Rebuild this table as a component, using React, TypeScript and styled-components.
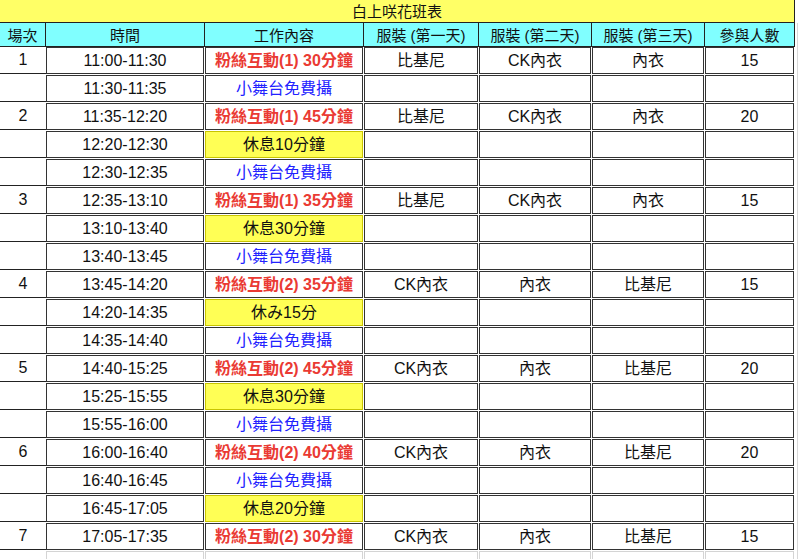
import styled, { createGlobalStyle } from "styled-components";

type Kind = "show" | "stage" | "break";

type Slot = {
  no?: string;
  time: string;
  kind: Kind;
  task: string;
  outfits?: [string, string, string];
  people?: string;
};

const FIRST: [string, string, string] = ["比基尼", "CK內衣", "內衣"];
const SECOND: [string, string, string] = ["CK內衣", "內衣", "比基尼"];

const slots: Slot[] = [
  { no: "1", time: "11:00-11:30", kind: "show", task: "粉絲互動(1) 30分鐘", outfits: FIRST, people: "15" },
  { time: "11:30-11:35", kind: "stage", task: "小舞台免費攝" },
  { no: "2", time: "11:35-12:20", kind: "show", task: "粉絲互動(1) 45分鐘", outfits: FIRST, people: "20" },
  { time: "12:20-12:30", kind: "break", task: "休息10分鐘" },
  { time: "12:30-12:35", kind: "stage", task: "小舞台免費攝" },
  { no: "3", time: "12:35-13:10", kind: "show", task: "粉絲互動(1) 35分鐘", outfits: FIRST, people: "15" },
  { time: "13:10-13:40", kind: "break", task: "休息30分鐘" },
  { time: "13:40-13:45", kind: "stage", task: "小舞台免費攝" },
  { no: "4", time: "13:45-14:20", kind: "show", task: "粉絲互動(2) 35分鐘", outfits: SECOND, people: "15" },
  { time: "14:20-14:35", kind: "break", task: "休み15分" },
  { time: "14:35-14:40", kind: "stage", task: "小舞台免費攝" },
  { no: "5", time: "14:40-15:25", kind: "show", task: "粉絲互動(2) 45分鐘", outfits: SECOND, people: "20" },
  { time: "15:25-15:55", kind: "break", task: "休息30分鐘" },
  { time: "15:55-16:00", kind: "stage", task: "小舞台免費攝" },
  { no: "6", time: "16:00-16:40", kind: "show", task: "粉絲互動(2) 40分鐘", outfits: SECOND, people: "20" },
  { time: "16:40-16:45", kind: "stage", task: "小舞台免費攝" },
  { time: "16:45-17:05", kind: "break", task: "休息20分鐘" },
  { no: "7", time: "17:05-17:35", kind: "show", task: "粉絲互動(2) 30分鐘", outfits: SECOND, people: "15" },
];

const headings = ["場次", "時間", "工作內容", "服裝 (第一天)", "服裝 (第二天)", "服裝 (第三天)", "參與人數"];

const App = () => {
  return (
    <>
      <GlobalStyle />
      <Page>
        <Sheet>
          <Title>白上咲花班表</Title>
          {headings.map((h) => (
            <HeadCell key={h}>{h}</HeadCell>
          ))}
          {slots.map((s) => (
            <Row key={s.time} s={s} />
          ))}
          <NumCell $ghost />
          {[0, 1, 2, 3, 4, 5].map((i) => (
            <Cell key={i} $tone="ghost" />
          ))}
        </Sheet>
        <Edge />
      </Page>
    </>
  );
};

const Row = ({ s }: { s: Slot }) => {
  const outfits = s.outfits ?? ["", "", ""];
  return (
    <>
      <NumCell>{s.no}</NumCell>
      <Cell>{s.time}</Cell>
      {s.kind === "break" ? (
        <Cell $tone="break">{s.task}</Cell>
      ) : (
        <Cell>
          {s.kind === "show" ? <ShowText>{s.task}</ShowText> : <StageText>{s.task}</StageText>}
        </Cell>
      )}
      {outfits.map((o, i) => (
        <Cell key={i}>{o}</Cell>
      ))}
      <Cell>{s.people}</Cell>
    </>
  );
};

const GlobalStyle = createGlobalStyle`
  html, body {
    margin: 0;
    padding: 0;
    background: #fff;
  }
  body {
    font-family: "Liberation Sans", "Noto Sans CJK TC", sans-serif;
    color: #111;
  }
`;

const Page = styled.div`
  display: flex;
  width: 800px;
  height: 559px;
  overflow: hidden;
`;

const Sheet = styled.div`
  display: grid;
  grid-template-columns: 46px 159px 159px 115px 113px 113px 90px;
  grid-template-rows: 23px 24px;
  grid-auto-rows: 28px;
  align-content: start;
  flex-shrink: 0;
`;

const Title = styled.div`
  grid-column: 1 / -1;
  display: flex;
  align-items: center;
  justify-content: center;
  background: #ffff66;
  border-bottom: 1px solid #222;
  border-right: 1px solid #222;
  font-size: 15px;
  line-height: 18px;
  padding-top: 1px;
  color: #111;
`;

const HeadCell = styled.div`
  display: flex;
  align-items: center;
  justify-content: center;
  background: #80ffff;
  border-right: 1px solid #222;
  border-bottom: 1px solid #222;
  font-size: 15px;
  line-height: 18px;
  padding-top: 2px;
  color: #111;
  white-space: nowrap;
`;

const NumCell = styled.div<{ $ghost?: boolean }>`
  display: flex;
  align-items: center;
  justify-content: center;
  margin-bottom: 1px;
  border-bottom: 1px solid ${(p) => (p.$ghost ? "transparent" : "#222")};
  font-size: 16px;
  line-height: 20px;
`;

const Cell = styled.div<{ $tone?: "plain" | "break" | "ghost" }>`
  display: flex;
  align-items: center;
  justify-content: center;
  margin: 0 1px 1px 0;
  border: 1px solid
    ${(p) => (p.$tone === "break" ? "#c8c400" : p.$tone === "ghost" ? "#d4d4d4" : "#333")};
  background: ${(p) => (p.$tone === "break" ? "#ffff55" : "#fff")};
  font-size: 16px;
  line-height: 20px;
  color: #111;
  white-space: nowrap;
`;

const ShowText = styled.span`
  color: #ea3a33;
  font-weight: 700;
`;

const StageText = styled.span`
  color: #2222ff;
`;

const Edge = styled.div`
  width: 1px;
  margin: 23px 0 0 2px;
  background: #d8d8d8;
`;

export default App;
